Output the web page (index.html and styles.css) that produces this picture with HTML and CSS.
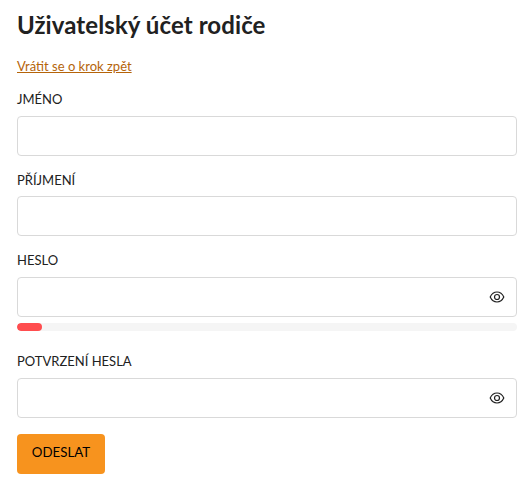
FILE: index.html
```
<!DOCTYPE html>
<html lang="cs">

<head>
  <meta charset="UTF-8" />
  <meta name="viewport" content="width=device-width, initial-scale=1.0" />
  <title>Uživatelský účet rodiče</title>
  <link rel="stylesheet" href="styles.css">
</head>

<body>
  <h1>Uživatelský účet rodiče</h1>
  <a class="back" href="#">Vrátit se o krok zpět</a>
  <form>
    <div class="field">
      <label for="name">Jméno</label>
      <input type="text" id="name" />
    </div>
    <div class="field">
      <label for="surname">Příjmení</label>
      <input type="text" id="surname" />
    </div>
    <div class="field field-strength">
      <label for="password">Heslo</label>
      <div class="password">
        <input type="password" id="password" />
        <button type="button" class="toggle" aria-label="Zobrazit heslo">
          <svg viewBox="0 0 16 16" width="16" height="16">
            <path d="M1.200 8C2.700 4.700 5 3 8 3s5.300 1.700 6.800 5c-1.500 3.300-3.800 5-6.800 5S2.700 11.300 1.200 8z" />
            <circle cx="8" cy="8" r="2.500" />
          </svg>
        </button>
      </div>
      <!-- síla hesla -->
      <div class="strength">
        <div class="strength-bar"></div>
      </div>
    </div>
    <div class="field">
      <label for="password2">Potvrzení hesla</label>
      <div class="password">
        <input type="password" id="password2" />
        <button type="button" class="toggle" aria-label="Zobrazit heslo">
          <svg viewBox="0 0 16 16" width="16" height="16">
            <path d="M1.200 8C2.700 4.700 5 3 8 3s5.300 1.700 6.800 5c-1.500 3.300-3.800 5-6.800 5S2.700 11.300 1.200 8z" />
            <circle cx="8" cy="8" r="2.500" />
          </svg>
        </button>
      </div>
    </div>
    <button type="submit" class="submit">Odeslat</button>
  </form>
</body>

</html>
```
FILE: styles.css
```
* {
  box-sizing: border-box;
}

body {
  margin: 0;
  padding: 9px 7px 0 17px;
  background: #fff;
  color: #212121;
  font-family: Lato, sans-serif;
  font-size: 14px;
}

h1 {
  margin: 0 0 16px;
  font-size: 24px;
  line-height: 32px;
  font-weight: 700;
  letter-spacing: 0.09px;
}

.back {
  display: block;
  width: max-content;
  margin-bottom: 16px;
  color: #b5640a;
  font-size: 13px;
  line-height: 18px;
}

.field {
  margin-bottom: 16px;
}

.field label {
  display: block;
  margin-bottom: 7.5px;
  font-size: 13px;
  line-height: 17px;
  text-transform: uppercase;
}

.field input {
  display: block;
  width: 100%;
  height: 40px;
  padding: 0 12px;
  border: 1px solid #d9d9d9;
  border-radius: 4px;
  background: #fff;
  outline: none;
  font: inherit;
}

.password {
  position: relative;
}

.toggle {
  position: absolute;
  top: 12px;
  right: 12.5px;
  width: 16px;
  height: 16px;
  padding: 0;
  border: none;
  background: none;
  cursor: pointer;
}

.toggle svg {
  display: block;
  fill: none;
  stroke: #212121;
  stroke-width: 1.2;
}

.field-strength {
  margin-bottom: 22.5px;
}

.strength {
  height: 8px;
  margin-top: 6px;
  border-radius: 4px;
  background: #f5f5f5;
  overflow: hidden;
}

.strength-bar {
  width: 5%;
  height: 100%;
  border-radius: 4px;
  background: #ff4d4f;
}

.submit {
  display: block;
  width: 88px;
  height: 40px;
  padding: 0 0 4px;
  border: none;
  border-radius: 4px;
  background: #f7931e;
  color: #000;
  font-family: inherit;
  font-size: 13.3px;
  text-transform: uppercase;
  cursor: pointer;
}
```
